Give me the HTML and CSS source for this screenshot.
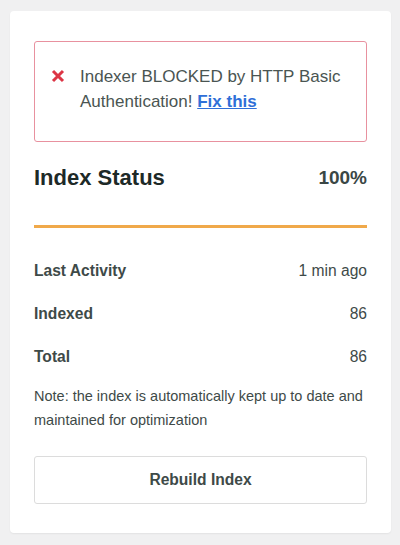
FILE: index.html
```html
<!DOCTYPE html>
<html lang="en">

<head>
  <meta charset="UTF-8">
  <meta name="viewport" content="width=device-width, initial-scale=1.0">
  <title>Index Status</title>
  <link rel="stylesheet" href="styles.css">
</head>

<body>
  <div class="card">
    <div class="alert">
      <svg class="alert-icon" width="14" height="14" viewBox="0 0 14 14">
        <path d="M2 2 L12 12 M12 2 L2 12" stroke="#dc3545" stroke-width="3" />
      </svg>
      <p>Indexer BLOCKED by HTTP Basic Authentication! <a href="#">Fix this</a></p>
    </div>

    <div class="status-head">
      <h2>Index Status</h2>
      <span class="percent">100%</span>
    </div>

    <div class="progress">
      <div class="progress-fill" style="width: 100%"></div>
    </div>

    <ul class="stats">
      <li><span class="label">Last Activity</span><span>1 min ago</span></li>
      <li><span class="label">Indexed</span><span>86</span></li>
      <li><span class="label">Total</span><span>86</span></li>
    </ul>

    <p class="note">Note: the index is automatically kept up to date and maintained for optimization</p>

    <button class="rebuild">Rebuild Index</button>
  </div>
</body>

</html>
```

FILE: styles.css
```css
body {
  margin: 0;
  padding: 11px 9px 11px 10px;
  background-color: #f0f0f1;
  font-family: "Liberation Sans", Arial, sans-serif;
  color: #3e4a48;
}

.card {
  background-color: #fff;
  border-radius: 4px;
  box-shadow: 0 1px 2px rgba(0, 0, 0, 0.06);
  padding: 30px 24px 29px;
}

/* 警告框 */
.alert {
  display: flex;
  align-items: flex-start;
  gap: 15px;
  border: 1px solid #e8919f;
  border-radius: 3px;
  padding: 22px 12px 27px 16px;
}

.alert-icon {
  flex-shrink: 0;
  margin-top: 5px;
}

.alert p {
  margin: 0;
  font-size: 17px;
  line-height: 25px;
  color: #4a5552;
}

.alert a {
  color: #2f6fd8;
  font-weight: bold;
}

.status-head {
  display: flex;
  justify-content: space-between;
  align-items: center;
  height: 40px;
  margin-top: 16px;
}

.status-head h2 {
  margin: 0;
  font-size: 22px;
  color: #1d2927;
}

.percent {
  font-size: 19px;
  font-weight: bold;
  color: #3a4745;
}

.progress {
  height: 3px;
  margin-top: 27px;
  background-color: #eee;
}

.progress-fill {
  height: 100%;
  background-color: #f0a94a;
}

.stats {
  list-style: none;
  margin: 21px 0 0;
  padding: 0;
}

.stats li {
  display: flex;
  justify-content: space-between;
  align-items: center;
  height: 43px;
  font-size: 15.6px;
}

.stats .label {
  font-weight: bold;
}

.note {
  margin: 6px 0 0;
  font-size: 14.5px;
  line-height: 24px;
}

.rebuild {
  display: block;
  width: 100%;
  height: 48px;
  margin-top: 24px;
  background-color: #fff;
  border: 1px solid #dcdcdc;
  border-radius: 3px;
  font-family: inherit;
  font-size: 15.6px;
  font-weight: bold;
  color: #3e4a48;
  cursor: pointer;
}
```
